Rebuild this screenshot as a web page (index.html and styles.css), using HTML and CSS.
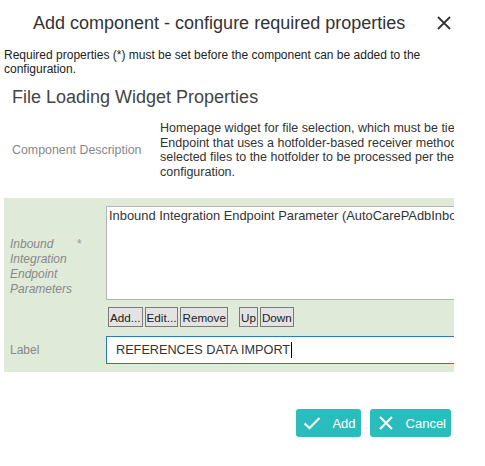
FILE: index.html
```html
<!DOCTYPE html>
<html>
<head>
<meta charset="utf-8">
<link rel="stylesheet" href="styles.css">
</head>
<body>
<div class="dialog">
  <header class="dlg-head">
    <h1 class="dlg-title">Add component - configure required properties</h1>
    <button class="close" aria-label="Close">
      <svg width="14" height="14" viewBox="0 0 14 14"><path d="M1 1 L13 13 M13 1 L1 13" stroke="#333" stroke-width="1.8" fill="none"/></svg>
    </button>
  </header>
  <p class="note">Required properties (*) must be set before the component can be added to the configuration.</p>
  <h2 class="section-title">File Loading Widget Properties</h2>
  <div class="props">
    <div class="desc-row">
      <div class="desc-label">Component Description</div>
      <div class="desc-value">
        <span class="line">Homepage widget for file selection, which must be tied to an Inbound Integration</span>
        <span class="line">Endpoint that uses a hotfolder-based receiver method. The widget uploads the</span>
        <span class="line">selected files to the hotfolder to be processed per the Inbound Integration Endpoint</span>
        <span class="line">configuration.</span>
      </div>
    </div>
    <div class="required">
      <div class="field-row">
        <div class="field-label">
          <span class="label-text">Inbound Integration Endpoint Parameters</span>
          <span class="star">*</span>
        </div>
        <div class="field-value">
          <div class="listbox"><span class="line">Inbound Integration Endpoint Parameter (AutoCarePAdbInboundParameters)</span></div>
          <div class="list-buttons">
            <button class="sbtn">Add...</button>
            <button class="sbtn">Edit...</button>
            <button class="sbtn">Remove</button>
            <button class="sbtn gap">Up</button>
            <button class="sbtn">Down</button>
          </div>
        </div>
      </div>
      <div class="field-row label-row">
        <div class="field-label plain">Label</div>
        <div class="field-value">
          <div class="text-input">REFERENCES DATA IMPORT<span class="caret"></span></div>
        </div>
      </div>
    </div>
  </div>
  <footer class="dlg-foot">
    <button class="action">
      <span class="ico"><svg width="18" height="14" viewBox="0 0 18 14"><path d="M1.5 7.5 L6.5 12 L16.5 2" stroke="#fff" stroke-width="2" fill="none"/></svg></span>
      <span>Add</span>
    </button>
    <button class="action">
      <span class="ico"><svg width="14" height="14" viewBox="0 0 14 14"><path d="M1 1 L13 13 M13 1 L1 13" stroke="#fff" stroke-width="2" fill="none"/></svg></span>
      <span>Cancel</span>
    </button>
  </footer>
</div>
</body>
</html>
```

FILE: styles.css
```css
* { box-sizing: border-box; }
html, body { margin: 0; padding: 0; background: #fff; }
body { font-family: "Liberation Sans", Arial, sans-serif; color: #333; }

.dialog { width: 485px; }

.dlg-head {
  display: flex;
  align-items: center;
  padding: 10px 0 0 33px;
  height: 36px;
}
.dlg-title {
  margin: 0;
  font-size: 18px;
  font-weight: normal;
  line-height: 26px;
  color: #333;
  flex: 1;
}
.close {
  border: 0;
  background: transparent;
  padding: 0;
  width: 14px;
  height: 14px;
  margin-right: 34px;
  display: flex;
}

.note {
  margin: 12px 0 0 4px;
  font-size: 12px;
  line-height: 14px;
  color: #222;
  width: 470px;
}

.section-title {
  margin: 10px 0 0 12px;
  font-size: 18px;
  font-weight: normal;
  line-height: 22px;
  color: #444;
}

.props {
  width: 450px;
  margin-left: 4px;
  overflow: hidden;
}

.desc-row {
  display: flex;
  align-items: center;
  padding: 13px 0 19px;
}
.desc-label {
  width: 156px;
  padding-left: 8px;
  font-size: 12.4px;
  color: #888;
  flex: none;
}
.desc-value {
  font-size: 12.5px;
  line-height: 14.5px;
  color: #333;
  white-space: nowrap;
  flex: none;
}
.line { display: block; white-space: nowrap; }

.required {
  background: #e0ead9;
  padding: 8px 0 8px;
}
.field-row {
  display: flex;
  align-items: center;
}
.field-label {
  width: 102px;
  flex: none;
  padding-left: 6px;
  display: flex;
  align-items: flex-start;
  font-size: 12px;
  line-height: 15px;
  color: #888;
  font-style: italic;
}
.field-label.plain { font-style: normal; }
.label-text { width: 67px; }
.star { font-style: normal; color: #999; }
.field-value { flex: none; width: 400px; }

.listbox {
  height: 94px;
  background: #fff;
  border: 1px solid #b5b5b5;
  padding: 1px 2px;
  font-size: 12.9px;
  line-height: 15px;
  color: #333;
  overflow: hidden;
}
.list-buttons {
  display: flex;
  gap: 2px;
  margin: 7px 0 0 2px;
}
.sbtn {
  height: 20px;
  padding: 0 1px;
  font-family: "Liberation Sans", Arial, sans-serif;
  font-size: 11.7px;
  color: #222;
  background: #e3e3e3;
  border: 1px solid #7a7a7a;
  border-radius: 0;
}
.sbtn.gap { margin-left: 9px; }

.label-row { margin-top: 9px; }
.text-input {
  height: 28px;
  background: #fff;
  border: 1px solid #2a7bbd;
  padding: 0 9px;
  font-size: 12.7px;
  line-height: 26px;
  color: #333;
  display: flex;
  align-items: center;
}
.caret {
  display: inline-block;
  width: 1px;
  height: 16px;
  background: #000;
  margin-left: 1px;
}

.dlg-foot {
  display: flex;
  justify-content: flex-end;
  gap: 9px;
  padding: 37px 34px 0 0;
}
.action {
  height: 28px;
  display: flex;
  align-items: center;
  gap: 10px;
  padding: 0 5px 0 6px;
  background: #2bbdbd;
  border: 0;
  border-radius: 3px;
  color: #fff;
  font-family: "Liberation Sans", Arial, sans-serif;
  font-size: 13px;
}
.ico {
  width: 20px;
  display: flex;
  justify-content: center;
}
```
